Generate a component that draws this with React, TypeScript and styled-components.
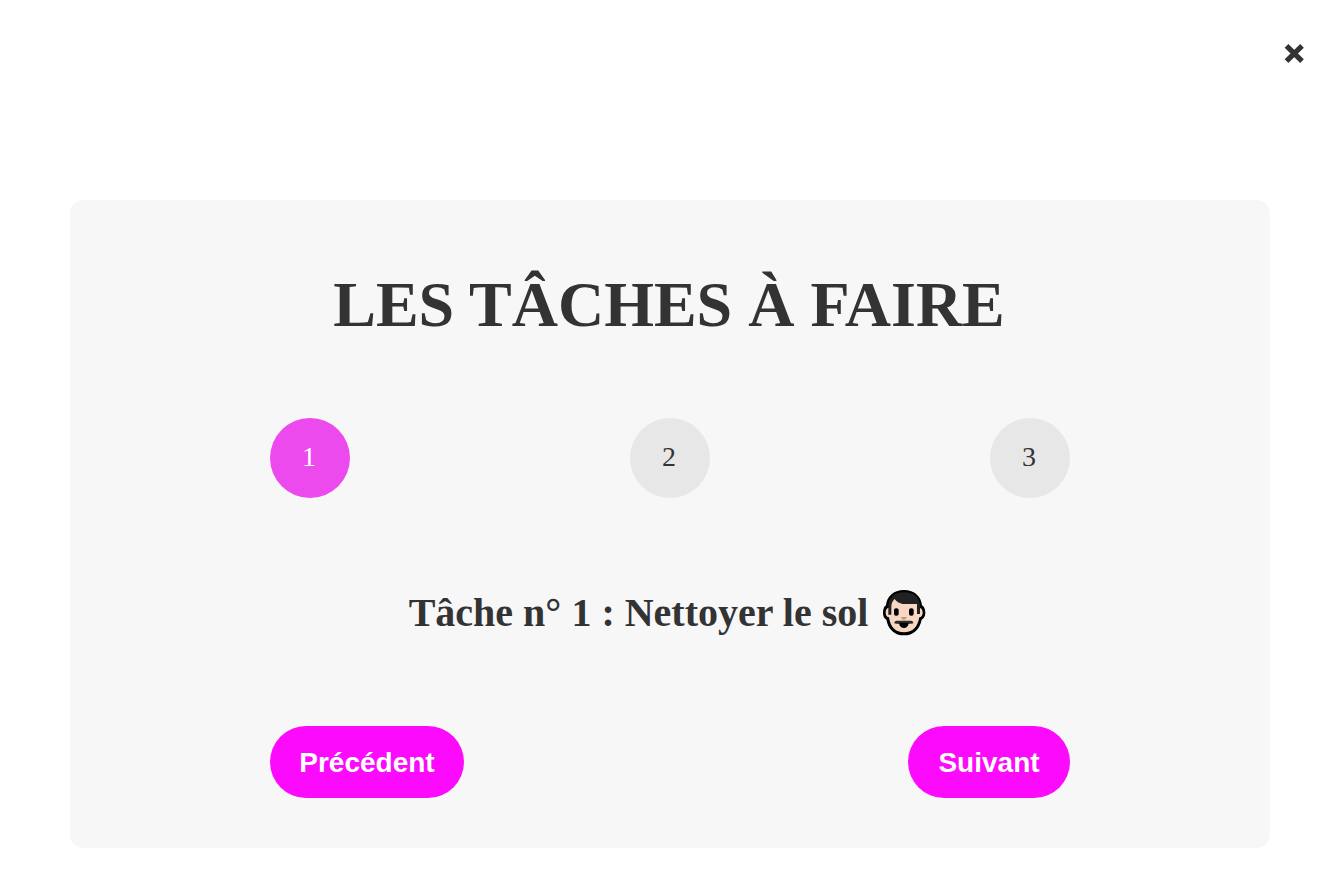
import React, { useState } from "react";
import styled, { createGlobalStyle } from "styled-components";

const GlobalStyle = createGlobalStyle`
  * { box-sizing: border-box; }
  body {
    margin: 0;
    background: #fff;
    color: #333;
    font-family: "Liberation Serif", "Times New Roman", serif;
  }
`;

const Page = styled.div`
  display: flex;
  flex-direction: column;
  height: 879px;
  padding: 32px 32px 0;
  overflow: hidden;
`;

const CloseButton = styled.button`
  display: flex;
  align-items: center;
  justify-content: center;
  align-self: flex-end;
  width: 24px;
  height: 44px;
  margin-bottom: 124px;
  padding: 0;
  border: 0;
  background: none;
  color: #333;
  cursor: pointer;
`;

const Card = styled.main`
  width: 1200px;
  height: 648px;
  margin-left: 38px;
  padding: 50px 200px;
  border-radius: 14px;
  background: #f7f7f7;
`;

const Title = styled.h1`
  height: 106px;
  margin: 0 -99px 62px -101px;
  font-size: 64px;
  line-height: 109px;
  text-align: center;
  white-space: nowrap;
`;

const Steps = styled.div`
  display: flex;
  justify-content: space-between;
`;

const Step = styled.div<{ $active: boolean }>`
  width: 80px;
  height: 80px;
  padding-right: 2px;
  border-radius: 50%;
  background: ${({ $active }) => ($active ? "#ed4aed" : "#e7e7e7")};
  color: ${({ $active }) => ($active ? "#fff" : "#333")};
  font-size: 28px;
  line-height: 78px;
  text-align: center;
`;

const Message = styled.h2`
  display: flex;
  align-items: center;
  justify-content: center;
  height: 60px;
  margin: 84px 0;
  padding: 2px 4px 0 0;
  font-size: 40px;
  line-height: 58px;
  white-space: pre;
`;

const Actions = styled.div`
  display: flex;
  justify-content: space-between;
`;

const ActionButton = styled.button<{ $width: number }>`
  width: ${({ $width }) => $width}px;
  height: 72px;
  padding: 1px 0 0;
  border: 0;
  border-radius: 36px;
  background: #fc0afc;
  color: #fff;
  font: bold 28px/71px "Liberation Sans", Arial, sans-serif;
  cursor: pointer;
`;

const FaceIcon = styled.svg`
  flex: none;
  width: 44px;
  height: 47px;
  margin: 0 1px 2px 14px;
`;

const Face = () => (
  <FaceIcon viewBox="24 19 132 141" aria-hidden="true">
    <path
      d="M90 22C58 22 38 42 36 68C30 71 27 80 27 90C27 100 30 107 37 111C43 141 62 158 90 158C118 158 137 141 143 111C150 107 154 100 154 90C154 80 150 71 144 68C142 42 122 22 90 22Z"
      fill="#000"
    />
    <path
      d="M90 31C65 31 46 48 45 75C38 75 35 82 35 90C35 98 39 103 45 104C49 134 65 149 90 149C115 149 131 134 136 104C142 103 146 98 146 90C146 82 142 75 136 75C135 48 116 31 90 31Z"
      fill="#f7d7c4"
    />
    <path
      d="M43 96V70C44 43 63 29 91 29C119 29 137 44 138 69V94H129V64H86C76 62 67 57 62 49C56 55 52 62 52 72V96Z"
      fill="#212121"
    />
    <rect x="60" y="77" width="14" height="22" rx="6" fill="#000" />
    <rect x="105" y="77" width="14" height="22" rx="6" fill="#000" />
    <path d="M81 103H98C98 108 94 111 89 111C85 111 82 108 81 103Z" fill="#c19a78" />
    <path
      d="M61 122C61 117 64 114 68 114H111C115 114 118 117 118 122C115 124 108 123 103 123H76C70 123 64 124 61 122Z"
      fill="#292929"
    />
    <path d="M75 121H104C103 131 97 136 90 136C82 136 76 131 75 121Z" fill="#000" />
  </FaceIcon>
);

const steps = [1, 2, 3];

export default function App() {
  const [step, setStep] = useState(1);

  return (
    <Page>
      <GlobalStyle />
      <CloseButton aria-label="Fermer">
        <svg width="20" height="20" viewBox="0 0 20 20" aria-hidden="true">
          <path d="M2.5 1.9L18 17.1M18 1.9L2.5 17.1" stroke="currentColor" strokeWidth="5.2" />
        </svg>
      </CloseButton>
      <Card>
        <Title>LES TÂCHES À FAIRE</Title>
        <Steps>
          {steps.map((n) => (
            <Step key={n} $active={n <= step}>
              {n}
            </Step>
          ))}
        </Steps>
        <Message>
          Tâche n° {step} : Nettoyer le sol
          <Face />
        </Message>
        <Actions>
          <ActionButton $width={194} onClick={() => setStep(Math.max(1, step - 1))}>
            Précédent
          </ActionButton>
          <ActionButton $width={162} onClick={() => setStep(Math.min(3, step + 1))}>
            Suivant
          </ActionButton>
        </Actions>
      </Card>
    </Page>
  );
}
